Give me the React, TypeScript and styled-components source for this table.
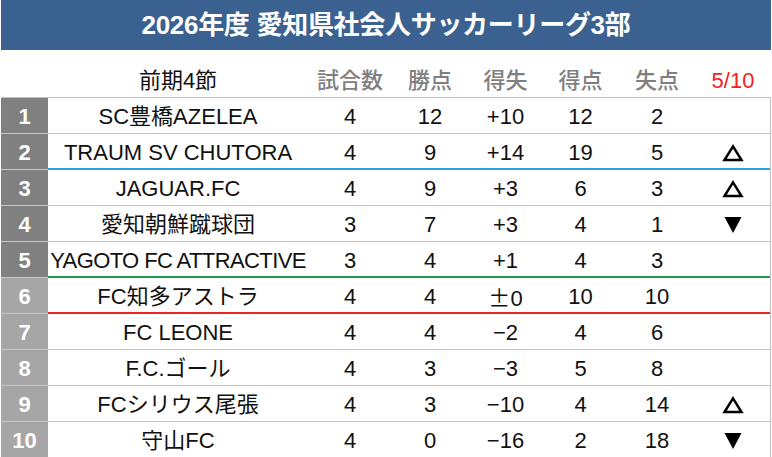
import React from "react";
import styled, { createGlobalStyle } from "styled-components";

const Global = createGlobalStyle`
  html, body { margin: 0; padding: 0; background: #ffffff; }
  body { font-family: "Liberation Sans", "Noto Sans CJK JP", sans-serif; }
`;

const COLS = "47px 260px 84px 76px 75px 75px 78px 74px";

const Page = styled.div`
  width: 770px;
  padding: 0 1px;
  background: #fff;
`;

const TitleBar = styled.div`
  height: 50px;
  background: #3b6190;
  color: #fff;
  display: flex;
  align-items: center;
  justify-content: center;
  font-family: "Liberation Sans", "Noto Sans CJK JP", sans-serif;
  font-size: 26px;
  font-weight: 700;
  letter-spacing: -0.3px;
  line-height: 30px;
  padding-bottom: 1px;
  box-sizing: border-box;
`;

const HeaderRow = styled.div`
  display: grid;
  grid-template-columns: ${COLS};
  height: 47px;
  align-items: end;
  font-size: 22px;
  line-height: 26px;
`;

const HeadCell = styled.div<{ $tone?: "dark" | "muted" | "red" }>`
  text-align: center;
  padding-bottom: 3px;
  white-space: nowrap;
  font-weight: ${(p) => (p.$tone === "dark" ? 400 : 500)};
  color: ${(p) => (p.$tone === "dark" ? "#111" : p.$tone === "red" ? "#f41c1c" : "#7f7f7f")};
`;

const Table = styled.div`
  border-top: 1px solid #c2c2c2;
  border-right: 1px solid #c2c2c2;
`;

const Row = styled.div<{ $line?: string }>`
  display: grid;
  grid-template-columns: ${COLS};
  height: 35px;
  align-items: center;
  position: relative;
  border-bottom: 1px solid #c2c2c2;
  line-height: 26px;
  &::after {
    content: "";
    display: ${(p) => (p.$line ? "block" : "none")};
    position: absolute;
    left: 47px;
    right: 0;
    bottom: -1px;
    height: 2px;
    background: ${(p) => p.$line || "transparent"};
  }
`;

const Rank = styled.div<{ $light: boolean }>`
  align-self: stretch;
  display: flex;
  align-items: center;
  justify-content: center;
  padding-top: 2px;
  background: ${(p) => (p.$light ? "#a6a6a6" : "#808080")};
  color: #fff;
  font-size: 22px;
  font-weight: 700;
  margin-bottom: -1px;
  box-shadow: inset 0 -1px 0 #c8c8c8;
`;

const Team = styled.div<{ $compact?: boolean }>`
  text-align: center;
  font-size: 22px;
  color: #111;
  white-space: nowrap;
  padding-top: 3px;
  letter-spacing: ${(p) => (p.$compact ? "-0.6px" : "0")};
`;

const Num = styled.div`
  text-align: center;
  font-size: 22px;
  color: #111;
  padding-top: 3px;
  white-space: nowrap;
`;

const PlusMinus = styled.span`
  font-family: "Noto Sans CJK JP", sans-serif;
  font-size: 22px;
`;

const Mark = styled.div`
  display: flex;
  justify-content: center;
  align-items: center;
  padding-top: 3px;
`;

type MarkType = "up" | "down" | "";

const rows: {
  team: string;
  g: number;
  pts: number;
  diff: string;
  gf: number;
  ga: number;
  mark: MarkType;
  line?: string;
}[] = [
  { team: "SC豊橋AZELEA", g: 4, pts: 12, diff: "+10", gf: 12, ga: 2, mark: "" },
  { team: "TRAUM SV CHUTORA", g: 4, pts: 9, diff: "+14", gf: 19, ga: 5, mark: "up", line: "#2aa3e2" },
  { team: "JAGUAR.FC", g: 4, pts: 9, diff: "+3", gf: 6, ga: 3, mark: "up" },
  { team: "愛知朝鮮蹴球団", g: 3, pts: 7, diff: "+3", gf: 4, ga: 1, mark: "down" },
  { team: "YAGOTO FC ATTRACTIVE", g: 3, pts: 4, diff: "+1", gf: 4, ga: 3, mark: "", line: "#1f9d4f" },
  { team: "FC知多アストラ", g: 4, pts: 4, diff: "±0", gf: 10, ga: 10, mark: "", line: "#ee2424" },
  { team: "FC LEONE", g: 4, pts: 4, diff: "−2", gf: 4, ga: 6, mark: "" },
  { team: "F.C.ゴール", g: 4, pts: 3, diff: "−3", gf: 5, ga: 8, mark: "" },
  { team: "FCシリウス尾張", g: 4, pts: 3, diff: "−10", gf: 4, ga: 14, mark: "up" },
  { team: "守山FC", g: 4, pts: 0, diff: "−16", gf: 2, ga: 18, mark: "down" },
];

const TriangleUp = () => (
  <svg width="22" height="18" viewBox="0 0 22 18">
    <polygon points="11,2.4 19.5,16 2.5,16" fill="none" stroke="#000" strokeWidth="2.5" strokeLinejoin="miter" />
  </svg>
);

const TriangleDown = () => (
  <svg width="22" height="18" viewBox="0 0 22 18">
    <polygon points="2.5,1 19.5,1 11,17" fill="#000" />
  </svg>
);

const Diff = ({ value }: { value: string }) =>
  value.startsWith("±") ? (
    <>
      <PlusMinus>±</PlusMinus>
      {value.slice(1)}
    </>
  ) : (
    <>{value}</>
  );

export default function App() {
  return (
    <Page>
      <Global />
      <TitleBar>2026年度 愛知県社会人サッカーリーグ3部</TitleBar>
      <HeaderRow>
        <div />
        <HeadCell $tone="dark">前期4節</HeadCell>
        <HeadCell>試合数</HeadCell>
        <HeadCell>勝点</HeadCell>
        <HeadCell>得失</HeadCell>
        <HeadCell>得点</HeadCell>
        <HeadCell>失点</HeadCell>
        <HeadCell $tone="red">5/10</HeadCell>
      </HeaderRow>
      <Table>
        {rows.map((r, i) => (
          <Row key={r.team} $line={r.line}>
            <Rank $light={i >= 5}>{i + 1}</Rank>
            <Team $compact={r.team.length > 18}>{r.team}</Team>
            <Num>{r.g}</Num>
            <Num>{r.pts}</Num>
            <Num>
              <Diff value={r.diff} />
            </Num>
            <Num>{r.gf}</Num>
            <Num>{r.ga}</Num>
            <Mark>
              {r.mark === "up" ? <TriangleUp /> : r.mark === "down" ? <TriangleDown /> : null}
            </Mark>
          </Row>
        ))}
      </Table>
    </Page>
  );
}
